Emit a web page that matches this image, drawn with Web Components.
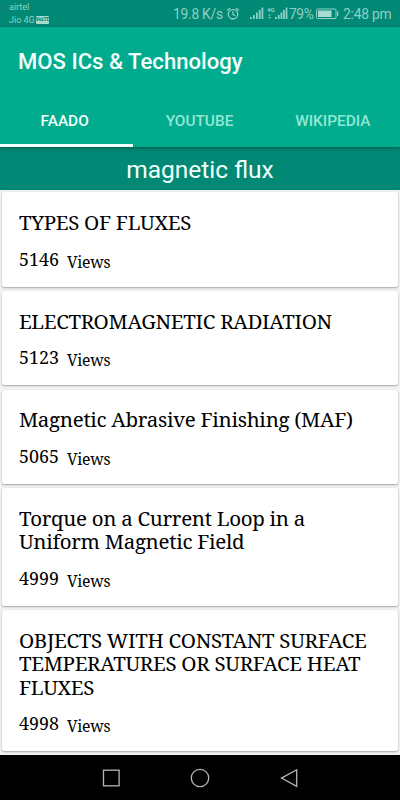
<!DOCTYPE html>
<html lang="en">
<head>
<meta charset="utf-8">
<title>MOS ICs &amp; Technology</title>
<style>
  body {
    margin: 0;
    font-family: Roboto, "Noto Sans", sans-serif;
  }
</style>
</head>
<body>
<faado-app></faado-app>

<script>
class StatusBar extends HTMLElement {
  constructor() {
    super();
    this.attachShadow({ mode: 'open' });
    this.shadowRoot.innerHTML = `
      <style>
        :host {
          display: flex;
          justify-content: space-between;
          height: 27px;
          box-sizing: border-box;
          padding: 0 9px;
          background: #018975;
          color: #8fd0c4;
        }
        .carrier {
          padding-top: 1px;
          font-size: 9px;
          line-height: 12.5px;
        }
        .sim { display: flex; align-items: center; }
        .volte {
          margin-left: 1px;
          width: 13px;
          height: 8px;
          background: #a5dcd2;
          color: #018975;
          border-radius: 1px;
          font-size: 4.8px;
          font-weight: 900;
          line-height: 8.5px;
          text-align: center;
        }
        .right {
          display: flex;
          align-items: center;
          height: 28px;
          font-size: 13.8px;
          white-space: nowrap;
        }
        svg { display: block; }
        .rate { width: 50px; letter-spacing: -0.25px; }
        .percent { width: 26px; letter-spacing: -0.4px; }
        .time { width: 48px; margin-left: 4px; letter-spacing: -0.2px; }
      </style>
      <div class="carrier">
        <div>airtel</div>
        <div class="sim">Jio 4G<span class="volte">VoLTE</span></div>
      </div>
      <div class="right">
        <span class="rate">19.8 K/s</span>
        <svg width="66" height="20" viewBox="222 4 66 20" fill="#8fd0c4">
          <g fill="none" stroke="#8fd0c4" stroke-width="1.3">
            <circle cx="232" cy="14.3" r="4.7"/>
            <path d="M232 11.4v3l2.2 1.4M226.3 10.6l2.8-2.6M237.7 10.6l-2.8-2.6"/>
          </g>
          <path d="M249 17h1.8v2h-1.8zM252 15h1.8v4h-1.8zM255 12.5h1.8v6.5h-1.8zM257.8 10h1.8v9h-1.8zM260.5 7.5h1.8v11.5h-1.8z"/>
          <text x="266" y="12.3" font-size="6.2" font-weight="700">4G</text>
          <path d="M267 15.5l1.5-1.5 1.5 1.5zM267 17l1.5 1.5L270 17zM274 17h1.8v2h-1.8zM276.8 15h1.8v4h-1.8zM279.5 12.5h1.8v6.5h-1.8zM282 10h1.8v9h-1.8zM284.6 7.5h1.8v11.5h-1.8z"/>
        </svg>
        <span class="percent">79%</span>
        <svg width="24" height="12" viewBox="0 0 24 12">
          <rect x="1.5" y="1" width="19.5" height="9.5" rx="1" fill="none" stroke="#8fd0c4"/>
          <path d="M3 2.5h13.5v6.5H3z" fill="#a5dcd2"/>
          <path d="M22 3.5h1.3v4.5H22z" fill="#8fd0c4"/>
        </svg>
        <span class="time">2:48 pm</span>
      </div>
    `;
  }
}

class AppHeader extends HTMLElement {
  constructor() {
    super();
    this.attachShadow({ mode: 'open' });
    this.shadowRoot.innerHTML = `
      <style>
        :host {
          display: block;
          height: 120px;
          background: #01ab8e;
          color: #f2fffc;
          position: relative;
          box-shadow: 0 1px 4px rgba(0, 0, 0, 0.35);
        }
        h1 {
          margin: 0;
          padding-left: 18px;
          height: 68px;
          line-height: 68px;
          font-size: 22.1px;
          font-weight: 500;
        }
        nav {
          display: grid;
          grid-template-columns: repeat(3, 1fr);
          height: 52px;
        }
      </style>
      <h1><slot name="title"></slot></h1>
      <nav><slot></slot></nav>
    `;
  }
}

class TabItem extends HTMLElement {
  constructor() {
    super();
    this.attachShadow({ mode: 'open' });
    this.shadowRoot.innerHTML = `
      <style>
        :host {
          display: block;
          box-sizing: border-box;
          height: 52px;
          padding-right: 1px;
          border-bottom: 3px solid transparent;
          text-align: center;
          font-size: 15.4px;
          font-weight: 500;
          line-height: 52px;
          color: #91e8d4;
        }
        :host([selected]) {
          color: #f2fffc;
          border-color: #f2fffc;
          padding-right: 4px;
        }
      </style>
      <slot></slot>
    `;
  }
}

class TopicBanner extends HTMLElement {
  constructor() {
    super();
    this.attachShadow({ mode: 'open' });
    this.shadowRoot.innerHTML = `
      <style>
        :host {
          display: block;
          height: 43px;
          line-height: 46px;
          background: #018975;
          color: #f2fffc;
          text-align: center;
          font-size: 24.5px;
        }
      </style>
      <slot></slot>
    `;
  }
}

class TopicCard extends HTMLElement {
  constructor() {
    super();
    this.attachShadow({ mode: 'open' });
    this.shadowRoot.innerHTML = `
      <style>
        :host {
          display: block;
          box-sizing: border-box;
          padding: 18.9px 16.5px 0;
          background: #fff;
          border-radius: 2px;
          box-shadow: 0 1px 2px rgba(0, 0, 0, 0.32), 0 0 1px rgba(0, 0, 0, 0.15);
          color: #000;
          font-family: "Noto Serif", "DejaVu Serif Condensed", "DejaVu Serif", serif;
        }
        .title {
          font-size: 20.5px;
          letter-spacing: -0.3px;
          line-height: 23.4px;
          white-space: nowrap;
        }
        .views {
          display: flex;
          height: 51.9px;
          padding-top: 11.9px;
          box-sizing: border-box;
          line-height: 24px;
        }
        .count { width: 48px; font-size: 17.9px; }
        .label { font-size: 15.7px; letter-spacing: -0.25px; padding-top: 3.2px; }
      </style>
      <div class="title"><slot></slot></div>
      <div class="views">
        <span class="count">${this.getAttribute('views')}</span>
        <span class="label">Views</span>
      </div>
    `;
  }
}

class SystemNav extends HTMLElement {
  constructor() {
    super();
    this.attachShadow({ mode: 'open' });
    this.shadowRoot.innerHTML = `
      <style>
        :host {
          display: flex;
          justify-content: center;
          align-items: center;
          gap: 69px;
          height: 45px;
          background: #000;
        }
        svg { fill: none; stroke: #b4b4b4; stroke-width: 1.3; }
      </style>
      <svg width="20" height="20"><rect x="2.5" y="2.2" width="15.6" height="15.6"/></svg>
      <svg width="20" height="20"><circle cx="10" cy="10" r="8.7"/></svg>
      <svg width="20" height="20"><path d="M17.7 1.8v16.6L2.5 10.1z"/></svg>
    `;
  }
}

class FaadoApp extends HTMLElement {
  constructor() {
    super();
    this.attachShadow({ mode: 'open' });
    this.shadowRoot.innerHTML = `
      <style>
        :host {
          display: flex;
          flex-direction: column;
          width: 400px;
          height: 800px;
          overflow: hidden;
          background: #f3f3f3;
        }
        main {
          flex: 1;
          display: flex;
          flex-direction: column;
          gap: 4.4px;
          padding: 2.4px 2.4px 0;
        }
      </style>
      <status-bar></status-bar>
      <app-header>
        <span slot="title">MOS ICs &amp; Technology</span>
        <tab-item selected>FAADO</tab-item>
        <tab-item>YOUTUBE</tab-item>
        <tab-item>WIKIPEDIA</tab-item>
      </app-header>
      <topic-banner>magnetic flux</topic-banner>
      <main>
        <topic-card views="5146">TYPES OF FLUXES</topic-card>
        <topic-card views="5123">ELECTROMAGNETIC RADIATION</topic-card>
        <topic-card views="5065">Magnetic Abrasive Finishing (MAF)</topic-card>
        <topic-card views="4999">Torque on a Current Loop in a<br>Uniform Magnetic Field</topic-card>
        <topic-card views="4998">OBJECTS WITH CONSTANT SURFACE<br>TEMPERATURES OR SURFACE HEAT<br>FLUXES</topic-card>
      </main>
      <system-nav></system-nav>
    `;
  }
}

customElements.define('status-bar', StatusBar);
customElements.define('app-header', AppHeader);
customElements.define('tab-item', TabItem);
customElements.define('topic-banner', TopicBanner);
customElements.define('topic-card', TopicCard);
customElements.define('system-nav', SystemNav);
customElements.define('faado-app', FaadoApp);
</script>
</body>
</html>
